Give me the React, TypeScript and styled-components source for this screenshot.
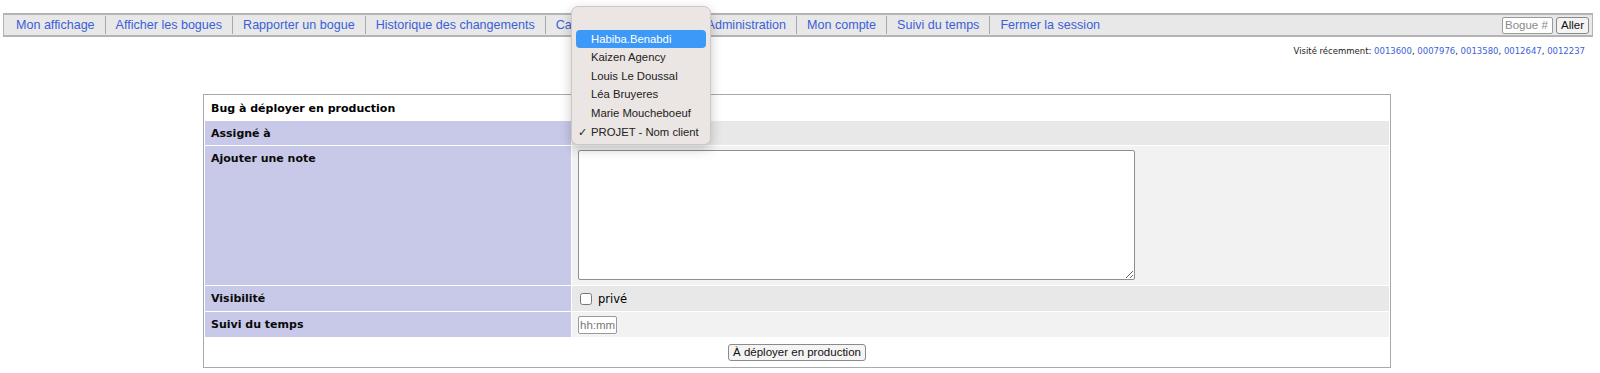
import styled, { createGlobalStyle } from 'styled-components'

const GlobalStyle = createGlobalStyle`
  html, body {
    margin: 0;
    padding: 0;
    background: #ffffff;
    overflow: hidden;
  }
  body {
    font-family: "DejaVu Sans", Verdana, sans-serif;
    color: #000;
  }
`

const Page = styled.div`
  position: relative;
  padding: 13px 7px 0 3px;
`

const MenuBar = styled.div`
  display: flex;
  align-items: center;
  height: 24px;
  box-sizing: border-box;
  background: #e8e8e8;
  border: 1px solid #b4b4b4;
  border-top-width: 2px;
  border-bottom-width: 2px;
  padding: 0 3px 0 2px;
`

const MenuLinks = styled.div`
  display: flex;
  align-items: center;
  flex: 1;
  min-width: 0;
`

const MenuLink = styled.a<{ $first?: boolean }>`
  font-family: "Liberation Sans", Arial, sans-serif;
  font-size: 12.55px;
  color: #3b5fd9;
  text-decoration: none;
  white-space: nowrap;
  padding: 0 10px;
  line-height: 18px;
  border-left: ${(p) => (p.$first ? 'none' : '1px solid #a8a8a8')};
`

const JumpForm = styled.div`
  display: flex;
  align-items: center;
  gap: 3px;
`

const BugInput = styled.input`
  width: 51px;
  height: 17px;
  box-sizing: border-box;
  border: 1px solid #9a9a9a;
  border-radius: 2px;
  font-family: "Liberation Sans", Arial, sans-serif;
  font-size: 11.5px;
  padding: 0 2px;
  background: #fff;
  &::placeholder {
    color: #8a8a8a;
  }
`

const SmallButton = styled.button`
  width: 33px;
  height: 17px;
  box-sizing: border-box;
  border: 1px solid #8a8a8a;
  border-radius: 3px;
  background: #f4f4f4;
  font-family: "Liberation Sans", Arial, sans-serif;
  font-size: 11.5px;
  padding: 0;
  color: #111;
`

const Recent = styled.div`
  text-align: right;
  font-size: 8.5px;
  line-height: 10px;
  margin-top: 9px;
  padding-right: 8px;
  color: #222;
  a {
    color: #3b5fd9;
    text-decoration: none;
  }
`

const FormTable = styled.div`
  width: 1184px;
  margin: 38px 0 0 200px;
  border: 1px solid #a9a9a9;
  padding: 1px;
  background: #fff;
  display: grid;
  grid-template-columns: 366px 1fr;
  gap: 1px;
`

const TitleCell = styled.div`
  grid-column: 1 / -1;
  height: 24px;
  display: flex;
  align-items: center;
  padding-left: 6px;
  font-weight: bold;
  font-size: 11px;
`

const Label = styled.div<{ $h: number }>`
  background: #c8c8e8;
  height: ${(p) => p.$h}px;
  padding: 6px 0 0 6px;
  box-sizing: border-box;
  font-weight: bold;
  font-size: 11px;
  color: #0a0a0a;
`

const Value = styled.div<{ $h: number; $dark?: boolean }>`
  background: ${(p) => (p.$dark ? '#e8e8e8' : '#f2f2f2')};
  height: ${(p) => p.$h}px;
  box-sizing: border-box;
  padding: 4px 6px;
  display: flex;
  align-items: ${(p) => (p.$h > 40 ? 'flex-start' : 'center')};
  font-size: 11.5px;
`

const NoteArea = styled.textarea`
  width: 557px;
  height: 130px;
  box-sizing: border-box;
  border: 1px solid #8f8f8f;
  border-radius: 2px;
  background: #fff;
  margin: 0;
`

const Check = styled.input`
  width: 12px;
  height: 12px;
  margin: 0 6px 0 2px;
`

const TimeInput = styled.input`
  width: 39px;
  height: 18px;
  box-sizing: border-box;
  border: 1px solid #9a9a9a;
  border-radius: 2px;
  font-family: "Liberation Sans", Arial, sans-serif;
  font-size: 11.5px;
  padding: 0 1px;
  &::placeholder {
    color: #777;
  }
`

const ButtonRow = styled.div`
  grid-column: 1 / -1;
  height: 28px;
  display: flex;
  align-items: center;
  justify-content: center;
`

const SubmitButton = styled.button`
  width: 138px;
  height: 17px;
  box-sizing: border-box;
  border: 1px solid #8a8a8a;
  border-radius: 3px;
  background: #f4f4f4;
  font-family: "Liberation Sans", Arial, sans-serif;
  font-size: 11.5px;
  white-space: nowrap;
  padding: 0;
  color: #111;
`

const Popup = styled.div`
  position: absolute;
  left: 571px;
  top: 6px;
  width: 140px;
  height: 139px;
  box-sizing: border-box;
  padding: 4px;
  background: #ebe5e3;
  border: 1px solid #cdc7c5;
  border-radius: 7px;
  box-shadow: 0 4px 12px rgba(0, 0, 0, 0.22);
`

const Option = styled.div<{ $active?: boolean }>`
  position: relative;
  height: 18.6px;
  line-height: 18.6px;
  padding-left: 15px;
  border-radius: 4px;
  font-family: "Liberation Sans", Arial, sans-serif;
  font-size: 11.3px;
  white-space: nowrap;
  background: ${(p) => (p.$active ? '#3d99f7' : 'transparent')};
  color: ${(p) => (p.$active ? '#fff' : '#222')};
`

const Tick = styled.span`
  position: absolute;
  left: 2px;
  top: 0;
`

const options = [
  '',
  'Habiba.Benabdi',
  'Kaizen Agency',
  'Louis Le Doussal',
  'Léa Bruyeres',
  'Marie Moucheboeuf',
  'PROJET - Nom client',
]

const menu = [
  'Mon affichage',
  'Afficher les bogues',
  'Rapporter un bogue',
  'Historique des changements',
  'Calendrier',
  'Rapports',
  'Administration',
  'Mon compte',
  'Suivi du temps',
  'Fermer la session',
]

const recent = ['0013600', '0007976', '0013580', '0012647', '0012237']

export default function App() {
  return (
    <>
      <GlobalStyle />
      <Page>
        <MenuBar>
          <MenuLinks>
            {menu.map((m, i) => (
              <MenuLink key={m} href="#" $first={i === 0}>
                {m}
              </MenuLink>
            ))}
          </MenuLinks>
          <JumpForm>
            <BugInput placeholder="Bogue #" />
            <SmallButton>Aller</SmallButton>
          </JumpForm>
        </MenuBar>
        <Recent>
          Visité récemment:{' '}
          {recent.map((r, i) => (
            <span key={r}>
              <a href="#">{r}</a>
              {i < recent.length - 1 ? ', ' : ''}
            </span>
          ))}
        </Recent>

        <FormTable>
          <TitleCell>Bug à déployer en production</TitleCell>
          <Label $h={24}>Assigné à</Label>
          <Value $h={24} $dark />
          <Label $h={139}>Ajouter une note</Label>
          <Value $h={139}>
            <NoteArea />
          </Value>
          <Label $h={25}>Visibilité</Label>
          <Value $h={25} $dark>
            <Check type="checkbox" />
            privé
          </Value>
          <Label $h={25}>Suivi du temps</Label>
          <Value $h={25}>
            <TimeInput placeholder="hh:mm" />
          </Value>
          <ButtonRow>
            <SubmitButton>À déployer en production</SubmitButton>
          </ButtonRow>
        </FormTable>

        <Popup>
          {options.map((o, i) => (
            <Option key={i} $active={i === 1}>
              {i === options.length - 1 && <Tick>✓</Tick>}
              {o}
            </Option>
          ))}
        </Popup>
      </Page>
    </>
  )
}
